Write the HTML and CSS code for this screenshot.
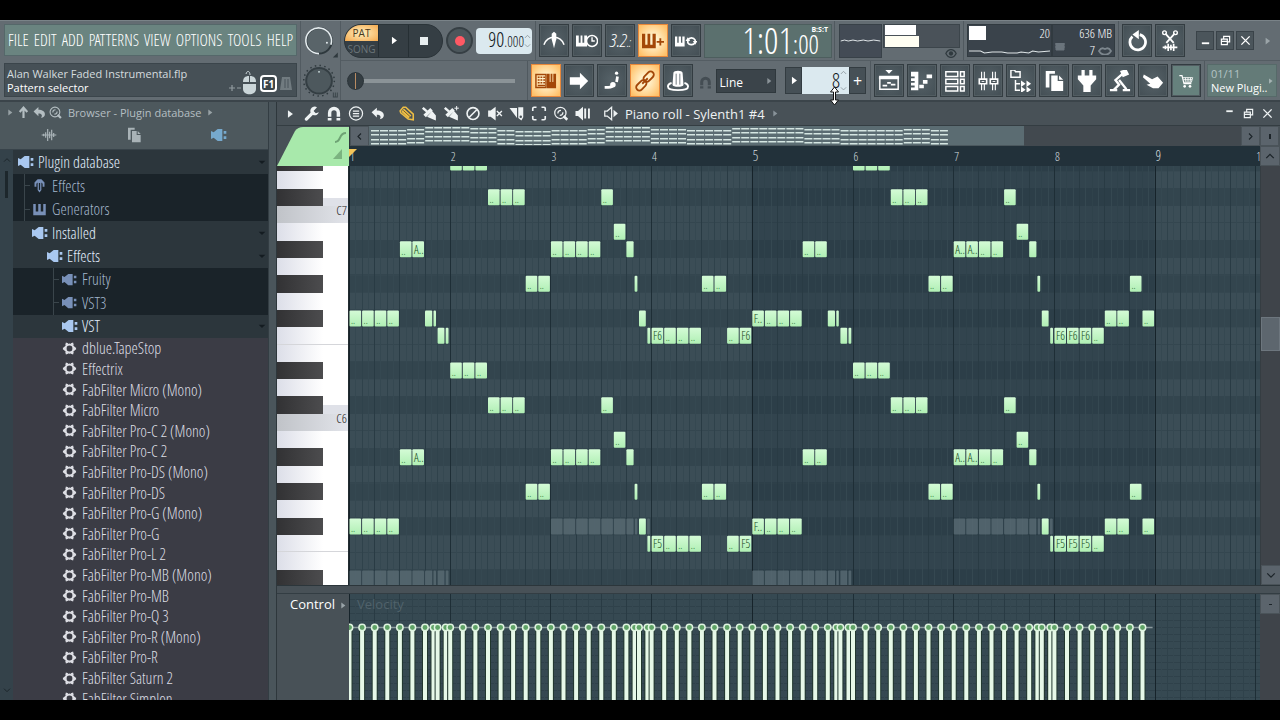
FILE: index.html
```html
<!DOCTYPE html>
<html lang="en">
<head>
<meta charset="utf-8">
<title>Piano roll - Sylenth1 #4</title>
<link rel="stylesheet" href="styles.css">
</head>
<body>
<svg class="sprite" aria-hidden="true">
  <symbol id="play" viewBox="0 0 24 24"><path d="M7 3l12 9-12 9z" fill="currentColor"/></symbol>
  <symbol id="plug" viewBox="0 0 24 24"><path d="M0 6l4 2 6-5h7v18h-7l-6-5-4 2z" fill="currentColor"/><path d="M19 6h4v4h-4zM19 14h4v4h-4z" fill="currentColor"/></symbol>
  <symbol id="gear" viewBox="0 0 24 24"><circle cx="12" cy="12" r="6.5" fill="none" stroke="currentColor" stroke-width="3.4"/><path d="M5 9v6M19 9v6M8 3l-1 4M16 3l1 4M8 21l-1-4M16 21l1-4M1.500 12h4M18.500 12h4" stroke="currentColor" stroke-width="3.600" fill="none"/></symbol>
  <symbol id="keys" viewBox="0 0 24 24"><path d="M2 3h4v12h4V3h4v12h4V3h4v18H2z" fill="currentColor"/></symbol>
  <symbol id="fx" viewBox="0 0 24 24"><path d="M4 14V7l5-5h6l5 5v7h-3V9l-2-2v12l-3 4-3-4V7L7 9v5z" fill="currentColor"/><path d="M12 8v11" stroke="#1a2329" stroke-width="2"/></symbol>
  <symbol id="wave" viewBox="0 0 24 24"><path d="M1 12h22M4 10v4M7 8v8M10 3v18M13 7v10M16 4v16M19 9v6" stroke="currentColor" stroke-width="1.800" fill="none"/></symbol>
  <symbol id="pages" viewBox="0 0 24 24"><path d="M3 1h10v3H7v15H3z" fill="currentColor"/><path d="M9 6h7v6h6v11H9z" fill="currentColor"/><path d="M17.500 6l4.500 4.500h-4.500z" fill="currentColor"/></symbol>
  <symbol id="up" viewBox="0 0 24 24"><path d="M12 22V5M5 11l7-8 7 8" fill="none" stroke="currentColor" stroke-width="4"/></symbol>
  <symbol id="undo" viewBox="0 0 24 24"><path d="M10 2v5c7 0 12 3 12 8 0 4-3 6-7 7 3-5 1-8-5-8v5L1 10z" fill="currentColor"/></symbol>
  <symbol id="search" viewBox="0 0 24 24"><circle cx="11" cy="11" r="9" fill="none" stroke="currentColor" stroke-width="2"/><path d="M7 12c0-3 2-5 5-5M15 10c0 3-2 5-5 5" fill="none" stroke="currentColor" stroke-width="2"/><path d="M16 16l6 6" stroke="currentColor" stroke-width="4"/></symbol>
  <symbol id="wrench" viewBox="0 0 24 24"><path d="M3 21l10-10" stroke="currentColor" stroke-width="5" stroke-linecap="round"/><path d="M20 2a7 7 0 1 0 3 8l-5 1.500-3.500-3.500z" fill="currentColor"/></symbol>
  <symbol id="magnet" viewBox="0 0 24 24"><path d="M5 17v-6a7 7 0 0 1 14 0v6" fill="none" stroke="currentColor" stroke-width="5.500"/><path d="M2 19h6v4H2zM16 19h6v4h-6z" fill="currentColor"/></symbol>
  <symbol id="list" viewBox="0 0 24 24"><circle cx="12" cy="12" r="10.500" fill="none" stroke="currentColor" stroke-width="2"/><path d="M7 8h10M7 12h10M7 16h10" stroke="currentColor" stroke-width="2"/></symbol>
  <symbol id="pencil" viewBox="0 0 24 24"><path d="M1 8L6 2l4 0 12 11 0 9-8-1L2 11z" fill="none" stroke="currentColor" stroke-width="2.500"/><path d="M3 9l4-5 12 11-5 5z" fill="currentColor"/><path d="M6 7l11 10" stroke="#6a5424" stroke-width="1.400"/></symbol>
  <symbol id="brush" viewBox="0 0 24 24"><path d="M2 3l7 6" stroke="currentColor" stroke-width="4"/><path d="M3 14L14 3l4 4L7 18zM9 17l8-9 6 7v8l-5-2z" fill="currentColor"/></symbol>
  <symbol id="brushplus" viewBox="0 0 24 24"><path d="M2 3l7 6" stroke="currentColor" stroke-width="4"/><path d="M3 14L14 3l4 4L7 18zM9 17l8-9 6 7v8l-5-2z" fill="currentColor"/><path d="M21 0v7M17.500 3.500h7" stroke="currentColor" stroke-width="1.600"/></symbol>
  <symbol id="no" viewBox="0 0 24 24"><circle cx="12" cy="12" r="9.500" fill="none" stroke="currentColor" stroke-width="2.600"/><path d="M6 18L18 6" stroke="currentColor" stroke-width="2.600"/></symbol>
  <symbol id="mute" viewBox="0 0 24 24"><path d="M1 7h4l8-6v22l-8-6H1z" fill="currentColor"/><path d="M15 8l8 8M23 8l-8 8" stroke="currentColor" stroke-width="2.200"/></symbol>
  <symbol id="slice" viewBox="0 0 24 24"><path d="M0 3h12v16z" fill="currentColor"/><path d="M14 2h8v16l-3 5-5-4z" fill="currentColor"/><circle cx="18" cy="17" r="2" fill="#485157"/></symbol>
  <symbol id="marquee" viewBox="0 0 24 24"><path d="M2 8V4q0-2 2-2h4M16 2h4q2 0 2 2v4M22 16v4q0 2-2 2h-4M8 22H4q-2 0-2-2v-4" fill="none" stroke="currentColor" stroke-width="2.600"/></symbol>
  <symbol id="preview" viewBox="0 0 24 24"><path d="M0 8h4l8-7v22l-8-7H0zM14 4h3v16h-3zM20 4h3v16h-3z" fill="currentColor"/></symbol>
  <symbol id="speaker" viewBox="0 0 24 24"><path d="M2 8h4l7-6v20l-7-6H2z" fill="none" stroke="currentColor" stroke-width="2"/><path d="M16 6l7 6-7 6z" fill="currentColor"/></symbol>
  <symbol id="min" viewBox="0 0 24 24"><path d="M4 18h16" stroke="currentColor" stroke-width="4"/></symbol>
  <symbol id="dash" viewBox="0 0 24 24"><path d="M5 7h14" stroke="currentColor" stroke-width="4"/></symbol>
  <symbol id="restore" viewBox="0 0 24 24"><path d="M8 8V3h13v12h-4M3 9h13v12H3zM3 14h13" fill="none" stroke="currentColor" stroke-width="2.600"/></symbol>
  <symbol id="close" viewBox="0 0 24 24"><path d="M3 3l18 18M21 3L3 21" stroke="currentColor" stroke-width="3"/></symbol>
  <symbol id="chev-l" viewBox="0 0 24 24"><path d="M16 4l-8 8 8 8" fill="none" stroke="currentColor" stroke-width="3"/></symbol>
  <symbol id="chev-r" viewBox="0 0 24 24"><path d="M8 4l8 8-8 8" fill="none" stroke="currentColor" stroke-width="3"/></symbol>
  <symbol id="chev-u" viewBox="0 0 24 24"><path d="M3 17l9-9 9 9" fill="none" stroke="currentColor" stroke-width="3"/></symbol>
  <symbol id="chev-d" viewBox="0 0 24 24"><path d="M3 8l9 9 9-9" fill="none" stroke="currentColor" stroke-width="3"/></symbol>
  <symbol id="tri-d" viewBox="0 0 24 24"><path d="M2 8h20l-10 10z" fill="currentColor"/></symbol>

  <symbol id="metronome" viewBox="0 0 24 24"><path d="M1 16C3 11 7 8 12 8s9 3 11 8" fill="none" stroke="currentColor" stroke-width="1.600"/><path d="M9.500 4L12 2l2.500 2v6L12 20l-2.500-10z" fill="currentColor"/></symbol>
  <symbol id="wait" viewBox="0 0 24 24"><path d="M0 6h3v8h2V6h2v8h2V6h3v12H0z" fill="currentColor"/><circle cx="17.500" cy="12" r="6" fill="#485359" stroke="currentColor" stroke-width="1.600"/><path d="M17.500 8v4h3" fill="none" stroke="currentColor" stroke-width="1.500"/></symbol>
  <symbol id="overdub" viewBox="0 0 24 24"><path d="M0 4h3.500v12h2.500V4h3v12h2.500V4H15v16H0zM19 9h2v3h3v2h-3v3h-2v-3h-3v-2h3z" fill="currentColor"/></symbol>
  <symbol id="looprec" viewBox="0 0 24 24"><path d="M0 7h2.500v7h1.500V7h2.500v7h1.500V7h2.500v11H0z" fill="currentColor"/><path d="M14 11a4.500 4.500 0 0 1 8 0v3M22 13a4.500 4.500 0 0 1-8 1v-3" fill="none" stroke="currentColor" stroke-width="1.800"/><path d="M19.500 12h5l-2.500 4zM11.500 12h5L14 8z" fill="currentColor"/></symbol>
  <symbol id="typing" viewBox="0 0 24 24"><path d="M1 5h11v14H1z" fill="none" stroke="currentColor" stroke-width="1.600"/><path d="M3 8h2m1 0h2m1 0h2M3 11h2m1 0h2m1 0h2M3 14h2m1 0h2m1 0h2M3 17h8" stroke="currentColor" stroke-width="1.600"/><path d="M13 4h3v9h1V4h2v9h1V4h3v16H13z" fill="currentColor"/></symbol>
  <symbol id="arrow" viewBox="0 0 24 24"><path d="M2 8h11V3l9 9-9 9v-5H2z" fill="currentColor"/></symbol>
  <symbol id="slide" viewBox="0 0 24 24"><path d="M4 19h4c3 0 5-1 6-4" fill="none" stroke="currentColor" stroke-width="3"/><path d="M17 13l1-6" stroke="currentColor" stroke-width="3"/><circle cx="17" cy="3.500" r="1.800" fill="currentColor"/><circle cx="13" cy="16" r="3" fill="currentColor"/></symbol>
  <symbol id="link" viewBox="0 0 24 24"><g fill="none" stroke="currentColor" stroke-width="2"><rect x="10" y="4" width="13" height="7" rx="3.500" transform="rotate(-45 16 8)"/><rect x="1" y="13" width="13" height="7" rx="3.500" transform="rotate(-45 8 16)"/><path d="M9 15l6-6"/></g></symbol>
  <symbol id="knob" viewBox="0 0 24 24"><path d="M7 3c0-3 10-3 10 0l1 13c0 3-12 3-12 0z" fill="currentColor"/><path d="M10 4v12M14 4v12" stroke="#687277"/><path d="M5 14c-3 1-4 2-4 4 0 3 5 4 11 4s11-1 11-4c0-2-1-3-4-4" fill="none" stroke="currentColor" stroke-width="2"/></symbol>
  <symbol id="redo" viewBox="0 0 24 24"><path d="M7 7a8.500 8.500 0 1 0 8-2" fill="none" stroke="currentColor" stroke-width="3"/><path d="M14 0v10l-7-5z" fill="currentColor"/></symbol>
  <symbol id="cut" viewBox="0 0 24 24"><path d="M7 4l9 10M17 4L8 14" stroke="currentColor" stroke-width="2"/><circle cx="6" cy="3" r="2" fill="none" stroke="currentColor" stroke-width="1.500"/><circle cx="18" cy="3" r="2" fill="none" stroke="currentColor" stroke-width="1.500"/><path d="M4 19h16M7 17v4M10 15v8M13 16v6M16 15v8" stroke="currentColor" stroke-width="1.800"/></symbol>
  <symbol id="playlist" viewBox="0 0 24 24"><path d="M8 0h8l-4 4zM1 7h22v3H1z" fill="currentColor"/><path d="M2 7h20v14H2z" fill="none" stroke="currentColor" stroke-width="1.600"/><path d="M5 17h5M10 14h4M14 16h5" stroke="currentColor" stroke-width="2"/></symbol>
  <symbol id="steps" viewBox="0 0 24 24"><path d="M0 2h8v20H0v-3h4v-2H0v-3h4v-2H0v-3h4V7H0z" fill="currentColor"/><path d="M9 18h5M13 13h5M17 7h6" stroke="currentColor" stroke-width="4"/></symbol>
  <symbol id="rack" viewBox="0 0 24 24"><path d="M2 2h13v5H2zM2 10h13v5H2zM2 18h13v5H2zM18 2h4v5h-4zM18 10h4v5h-4zM18 18h4v5h-4z" fill="none" stroke="currentColor" stroke-width="1.600"/></symbol>
  <symbol id="mixer" viewBox="0 0 24 24"><path d="M5 2v20M8 2v20M17 2v20M20 2v20" stroke="currentColor" stroke-width="1.200"/><path d="M2.500 10h8v5h-8zM14.500 10h8v5h-8z" fill="#485359" stroke="currentColor" stroke-width="1.800"/><path d="M5 12.500h3M17 12.500h3" stroke="currentColor"/></symbol>
  <symbol id="tree" viewBox="0 0 24 24"><path d="M1 0h4l1 2h5v6H1zM6 11v11h5M6 15h5" fill="none" stroke="currentColor" stroke-width="1.600"/><path d="M12 11.500l5 3.500-5 3.500zM18 11.500l5 3.500-5 3.500zM12 18l5 3.500-5 3.500zM18 18l5 3.500-5 3.500z" fill="currentColor"/></symbol>
  <symbol id="vplug" viewBox="0 0 24 24"><path d="M6 0h3.500v6h5V0H18v6h4v4l-6 7v7H8v-7l-6-7V6h4z" fill="currentColor"/></symbol>
  <symbol id="lamp" viewBox="0 0 24 24"><path d="M12 1l7-2 3 6-7 3z" fill="currentColor"/><path d="M15 4L7 11l4 5-6 6M11 11l8 10" fill="none" stroke="currentColor" stroke-width="2.500"/><path d="M1 22h8M15 22h8" stroke="currentColor" stroke-width="2.500"/></symbol>
  <symbol id="hand" viewBox="0 0 24 24"><path d="M2 5l9 5 6-3 6 7-5 6h-6l-7-4 4-1-8-7z" fill="currentColor"/></symbol>
  <symbol id="cart" viewBox="0 0 24 24"><path d="M2 4h4l3 12h11" fill="none" stroke="currentColor" stroke-width="1.800"/><path d="M7 7h15l-2 7H9M11 7l1 7M15 7v7M19 7l-1 7M8 10h13" fill="none" stroke="currentColor" stroke-width="1.300"/><circle cx="10" cy="20" r="2" fill="currentColor"/><circle cx="18" cy="20" r="2" fill="currentColor"/></symbol>
</svg>

<div class="app">
  <header class="toolbar">
    <div class="tb-left">
      <nav class="menubar"><button>FILE</button><button>EDIT</button><button>ADD</button><button>PATTERNS</button><button>VIEW</button><button>OPTIONS</button><button>TOOLS</button><button>HELP</button></nav>
      <div class="hint">
        <div class="hint-text"><div>Alan Walker Faded Instrumental.flp</div><div class="hint-sub">Pattern selector</div></div>
        <svg class="hint-icons" viewBox="0 0 66 26" aria-hidden="true"><path d="M1 18h6M4 15v6M9 18h4" stroke="#929b9f" stroke-width="1.200"/><path d="M15 14h13v5c0 7-13 7-13 0zM15 12c0-4 2-6 6-6v6zM22 6c4 0 6 2 6 6h-6z" fill="#cbd6d9"/><path d="M18 4c1-4 4-3 4 1" fill="none" stroke="#cbd6d9"/><rect x="33" y="6" width="15" height="15" rx="3" fill="#3c464b" stroke="#fff" stroke-width="2"/><text x="35" y="18" class="f1">F1</text><path d="M54 7h8l2 13H52z" fill="#717b80"/><path d="M57 9v9M60 9v9" stroke="#4a555a"/></svg>
      </div>
    </div>
    <div class="tb-knobs">
      <svg viewBox="0 0 40 40" aria-hidden="true"><circle cx="18" cy="20" r="13" fill="#596469" stroke="#2e383d" stroke-width="2"/><path d="M18 33A13 13 0 1 1 30 24" fill="none" stroke="#e5ecef" stroke-width="1.600"/><circle cx="26" cy="22" r="1" fill="#e5ecef"/><path d="M37 32v5h-5z" fill="#2f393e"/></svg>
      <svg viewBox="0 0 40 40" aria-hidden="true"><circle cx="18" cy="20" r="15.500" fill="none" stroke="#2f393e" stroke-width="1.500" stroke-dasharray="1.500 3.370"/><circle cx="18" cy="20" r="13" fill="#4d585d" stroke="#343e43" stroke-width="2"/><circle cx="18" cy="11" r="1" fill="#cdd"/><path d="M32 32h1v4h1v-4h1v4h1v-4h1v5h-5z" fill="#3b454a"/></svg>
    </div>
    <div class="tb-main">
      <div class="tb-row">
        <div class="transport">
          <button class="mode"><span class="pat">PAT</span><span class="song">SONG</span></button>
          <button aria-label="Play"><svg class="i12"><use href="#play"/></svg></button>
          <button aria-label="Stop"><span class="stop"></span></button>
        </div>
        <button class="rec" aria-label="Record"><span></span></button>
        <button class="tempo"><span class="t-int">90</span><span class="t-dec">.000</span><span class="spin"><svg><use href="#chev-u"/></svg><svg><use href="#chev-d"/></svg></span></button>
        <div class="btns sep-l">
          <button class="sq" aria-label="Metronome"><svg><use href="#metronome"/></svg></button>
          <button class="sq" aria-label="Wait for input"><svg><use href="#wait"/></svg></button>
          <button class="sq count">3.2<small>.:</small></button>
          <button class="sq on" aria-label="Overdub"><svg><use href="#overdub"/></svg></button>
          <button class="sq" aria-label="Loop record"><svg><use href="#looprec"/></svg></button>
        </div>
        <div class="clock"><span class="bst">B:S:T</span><span class="c-big">1:01</span><span class="c-small">:00</span></div>
        <div class="scopes sep-l">
          <svg class="scope" viewBox="0 0 42 34" aria-hidden="true"><path d="M0 17l4-1 4 1 5-1 5 1 6-1 5 1 6-1 7 1" fill="none" stroke="#e9eef0"/></svg>
          <div class="vu"><div class="vu-box"><i></i><i></i></div><svg viewBox="0 0 14 10" aria-hidden="true"><path d="M1 5c3-6 9-6 12 0-3 6-9 6-12 0z" fill="none" stroke="#303a3f" stroke-width="1.500"/><circle cx="7" cy="5" r="2.500" fill="#303a3f"/></svg></div>
        </div>
        <div class="cpu-wrap sep-l">
          <div class="cpu"><i></i><span>20</span><svg viewBox="0 0 84 6" preserveAspectRatio="none" aria-hidden="true"><path d="M0 2h12l4 2 8-1h10l6 1h10l4-1 8 1 4-2 6 1 12-1" fill="none" stroke="#dfe6e8" stroke-width="1.200"/></svg></div>
          <div class="mem"><span>636 MB</span><span class="poly"><svg viewBox="0 0 10 8" class="chip" aria-hidden="true"><path d="M1 0h8v7H1zM0 1h10M0 4h10" fill="#6b757c" stroke="#6b757c"/></svg>7<svg viewBox="0 0 14 8" class="lips" aria-hidden="true"><path d="M1 4c3-5 5-2 6-2s3-3 6 2c-3 5-9 5-12 0z" fill="none" stroke="#7c868d" stroke-width="1.800"/></svg></span></div>
        </div>
        <div class="btns sep-l">
          <button class="sq" aria-label="Undo"><svg><use href="#redo"/></svg></button>
          <button class="sq" aria-label="Edit audio"><svg><use href="#cut"/></svg></button>
        </div>
        <div class="winbtns">
          <button aria-label="Minimize"><svg><use href="#min"/></svg></button>
          <button aria-label="Restore"><svg><use href="#restore"/></svg></button>
          <button aria-label="Close"><svg><use href="#close"/></svg></button>
        </div>
        <svg class="more"><use href="#play"/></svg>
      </div>
      <div class="tb-row">
        <input class="slider" type="range" min="0" max="100" value="0" aria-label="Main pitch">
        <div class="btns sep-l">
          <button class="sq on" aria-label="Typing keyboard"><svg><use href="#typing"/></svg></button>
          <button class="sq" aria-label="Step"><svg><use href="#arrow"/></svg></button>
          <button class="sq" aria-label="Slide"><svg><use href="#slide"/></svg></button>
          <button class="sq on" aria-label="Link"><svg><use href="#link"/></svg></button>
          <button class="sq" aria-label="Multilink"><svg><use href="#knob"/></svg></button>
        </div>
        <svg class="snapicon"><use href="#magnet"/></svg>
        <div class="snap"><select aria-label="Snap"><option>Line</option></select><svg><use href="#play"/></svg></div>
        <div class="pattern">
          <button aria-label="Pattern menu"><svg class="i12"><use href="#play"/></svg></button>
          <input type="text" value="8" aria-label="Pattern">
          <span class="spin"><svg><use href="#chev-u"/></svg><svg><use href="#chev-d"/></svg></span>
          <button aria-label="Add pattern">+</button>
        </div>
        <div class="btns grow sep-l">
          <button class="sq" aria-label="Playlist"><svg><use href="#playlist"/></svg></button>
          <button class="sq" aria-label="Piano roll"><svg><use href="#steps"/></svg></button>
          <button class="sq" aria-label="Channel rack"><svg><use href="#rack"/></svg></button>
          <button class="sq" aria-label="Mixer"><svg><use href="#mixer"/></svg></button>
          <button class="sq" aria-label="Browser"><svg><use href="#tree"/></svg></button>
          <button class="sq" aria-label="Projects"><svg><use href="#pages"/></svg></button>
          <button class="sq" aria-label="Plugins"><svg><use href="#vplug"/></svg></button>
          <button class="sq" aria-label="Tempo tapper"><svg><use href="#lamp"/></svg></button>
          <button class="sq" aria-label="Touch"><svg><use href="#hand"/></svg></button>
          <button class="sq shop" aria-label="Shop"><svg><use href="#cart"/></svg></button>
        </div>
        <div class="news sep-l"><div class="news-box"><span class="news-n">01/11</span><span>New Plugi..</span><svg><use href="#play"/></svg></div></div>
      </div>
    </div>
  </header>

  <main class="work">
    <aside class="browser">
      <div class="br-head">
        <div class="br-title"><svg class="dim"><use href="#play"/></svg><svg><use href="#up"/></svg><svg><use href="#undo"/></svg><svg><use href="#search"/></svg><span>Browser - Plugin database</span><svg class="dim"><use href="#play"/></svg></div>
        <div class="br-tabs"><button aria-label="All"><svg><use href="#wave"/></svg></button><button aria-label="Project"><svg><use href="#pages"/></svg></button><button class="sel" aria-label="Plugins"><svg><use href="#plug"/></svg></button></div>
      </div>
      <div class="br-body">
        <div class="br-scroll"><svg><use href="#chev-u"/></svg><i></i><svg class="end"><use href="#chev-d"/></svg></div>
        <div class="tree">
          <div class="node root"><svg><use href="#plug"/></svg><span>Plugin database</span><svg class="fold"><use href="#tri-d"/></svg></div>
          <div class="nodes">
            <div class="node l1 dark"><svg><use href="#fx"/></svg><span>Effects</span></div>
            <div class="node l1 dark"><svg><use href="#keys"/></svg><span>Generators</span></div>
            <div class="node l1"><svg><use href="#plug"/></svg><span>Installed</span><svg class="fold"><use href="#tri-d"/></svg></div>
            <div class="node l2"><svg><use href="#plug"/></svg><span>Effects</span><svg class="fold"><use href="#tri-d"/></svg></div>
            <div class="node l3 dark"><svg><use href="#plug"/></svg><span>Fruity</span></div>
            <div class="node l3 dark"><svg><use href="#plug"/></svg><span>VST3</span></div>
            <div class="node l3"><svg><use href="#plug"/></svg><span>VST</span><svg class="fold"><use href="#tri-d"/></svg></div>
          </div>
          <ul class="plugins" id="plugins"></ul>
        </div>
      </div>
    </aside>
    <div class="splitter"></div>

    <section class="roll">
      <div class="roll-title">
        <div class="tools">
          <svg class="first"><use href="#play"/></svg><svg><use href="#wrench"/></svg><svg><use href="#magnet"/></svg><svg><use href="#list"/></svg><svg class="gap"><use href="#undo"/></svg>
          <svg class="gold"><use href="#pencil"/></svg><svg><use href="#brush"/></svg><svg><use href="#brushplus"/></svg><svg><use href="#no"/></svg><svg><use href="#mute"/></svg><svg><use href="#slice"/></svg><svg><use href="#marquee"/></svg><svg><use href="#search"/></svg><svg><use href="#preview"/></svg>
        </div>
        <svg class="spk"><use href="#speaker"/></svg><h1>Piano roll - Sylenth1 #4</h1><svg class="caret"><use href="#play"/></svg>
        <div class="roll-win"><button aria-label="Minimize"><svg><use href="#dash"/></svg></button><button aria-label="Restore"><svg><use href="#restore"/></svg></button><button aria-label="Close"><svg><use href="#close"/></svg></button></div>
      </div>
      <svg class="corner" viewBox="0 0 72 40" preserveAspectRatio="none" aria-hidden="true"><path d="M0 40L18 5Q21 1 26 1H72V40z" fill="#a8e9ab"/><path d="M58 16c7 0 3-9 11-9" fill="none" stroke="#6ea374" stroke-width="2"/><path d="M56 33l9-10v10z" fill="#7bb380"/></svg>
      <div class="overview"><button aria-label="Scroll left"><svg><use href="#chev-l"/></svg></button><div class="track"><svg id="mini" class="mini"></svg></div><button aria-label="Scroll right"><svg><use href="#chev-r"/></svg></button></div>
      <button class="ov-end" aria-label="Zoom"><i></i></button>
      <svg id="ruler" class="ruler"></svg>
      <button class="sc-up" aria-label="Scroll up"><svg><use href="#chev-u"/></svg></button>
      <div class="keys"><div class="keys-in" id="keyboard"></div></div>
      <svg id="grid" class="grid"></svg>
      <div class="vscroll"><i></i><button aria-label="Scroll down"><svg><use href="#chev-d"/></svg></button></div>
      <div class="hsplit"></div>
      <div class="control"><span>Control</span><svg><use href="#play"/></svg></div>
      <svg id="lane" class="lane"></svg>
      <div class="lane-sc"><button aria-label="Collapse"><i></i></button></div>
    </section>
  </main>
  <svg class="cursor" viewBox="0 0 10 20" aria-hidden="true"><path d="M5 1l4 5H6v8h3l-4 5-4-5h3V6H1z" fill="#fff" stroke="#111" stroke-width="1"/></svg>
</div>
<script src="app.js"></script>
</body>
</html>
```

FILE: styles.css
```css
* { box-sizing: border-box; }
:root {
  --narrow: "Open Sans Condensed Light", "Liberation Sans Narrow", "Open Sans", sans-serif;
  --ui: "Open Sans", "Noto Sans", sans-serif;
}
body { margin: 0; background: #000; padding: 20px 0; font-family: var(--ui); color: #fff; }
button, input, select { font: inherit; color: inherit; border: 0; padding: 0; margin: 0; background: none; border-radius: 0; }
svg { display: block; flex: none; }
.sprite { position: absolute; width: 0; height: 0; }
.app { position: relative; display: flex; flex-direction: column; height: calc(100vh - 40px); min-height: 400px; overflow: hidden; background: #485157; }

/* toolbar */
.toolbar { display: flex; height: 82px; background: #636c72; border-bottom: 2px solid #3b444a; border-top: 1px solid #7a8388; }
.tb-left { width: 300px; padding: 3px 3px 3px 4px; display: flex; flex-direction: column; gap: 7px; }
.menubar { display: flex; flex: 1; align-items: center; justify-content: space-between; padding: 0 3px 0 3px; background: #6a8480; border: 1px solid #55686a; font: 16px var(--narrow); }
.hint { display: flex; flex: 1; justify-content: space-between; background: #465056; border: 1px solid #3b454b; padding: 3px 2px 0; font-size: 11px; line-height: 14px; color: #d5dcdf; white-space: nowrap; }
.hint-sub { color: #fff; }
.hint-icons { width: 66px; height: 26px; align-self: flex-end; margin-left: -20px; }
.f1 { font: bold 10px var(--ui); fill: #fff; }
.tb-knobs { width: 41px; display: flex; flex-direction: column; border-left: 1px solid #525b61; border-right: 1px solid #525b61; }
.tb-knobs svg { width: 40px; flex: 1; min-height: 0; }
.tb-main { flex: 1; min-width: 0; display: flex; flex-direction: column; }
.tb-row { flex: 1; display: flex; align-items: center; padding: 0 3px; min-height: 0; }
.tb-row + .tb-row { border-top: 1px solid #545d63; }
.sep-l { border-left: 1px solid #50595f; }
.transport { display: flex; width: 99px; height: 34px; border-radius: 17px; overflow: hidden; background: #353e44; border: 1px solid #2b3439; }
.transport button { flex: 1; display: flex; align-items: center; justify-content: center; border-left: 1px solid #262f34; }
.transport button:last-child { padding-right: 4px; }
.transport .mode { width: 33px; flex: none; flex-direction: column; border: 0; font: 10px var(--ui); line-height: 16px; }
.mode span { width: 100%; height: 16px; }
.pat { background: radial-gradient(#fff0c0, #f5a94d); color: #493a1c; }
.song { color: #6b757a; }
.i12 { width: 10px; height: 11px; }
.stop { width: 8px; height: 8px; background: #e8eef0; }
.rec { width: 27px; height: 27px; margin-left: 3px; border-radius: 50%; background: #4b565b; border: 2px solid #363f44; display: grid; place-items: center; }
.rec span { width: 10px; height: 10px; border-radius: 50%; background: #ff5964; }
.tempo { display: flex; align-items: baseline; justify-content: flex-end; width: 56px; height: 26px; margin-left: 3px; padding: 0 1px; border-radius: 4px; background: #dbe9ef; color: #101619; font: 20px/24px var(--narrow); }
.t-dec { font-size: 14px; }
.spin { display: flex; flex-direction: column; gap: 2px; align-self: center; color: #8e999f; }
.spin svg { width: 7px; height: 7px; }
.btns { display: flex; gap: 3px; padding-left: 3px; margin-left: 3px; height: 100%; align-items: center; }
.btns.grow { flex: 1; }
.grow .sq { flex: 1; }
.sq { width: 30px; height: 33px; display: grid; place-items: center; background: radial-gradient(#566268, #434e54); border: 1px solid #333c41; box-shadow: inset 0 0 0 1px #525d62; }
.sq svg { width: 22px; height: 22px; }
.sq.on { background: radial-gradient(#fff3cf 20%, #ffc169 90%); border-color: #e8883a; color: #a34708; box-shadow: none; }
.sq.shop { background: #66817d; }
.sq.shop svg { width: 16px; height: 16px; }
.sq.count { font: italic 19px/30px var(--narrow); display: block; }
.count small { font-size: 12px; }
.clock { position: relative; flex: 1; height: 34px; margin: 0 2px 0 3px; padding-right: 12px; background: #5b706e; border: 1px solid #4d5e5e; display: flex; align-items: baseline; justify-content: flex-end; line-height: 32px; font-family: var(--narrow); }
.c-big { font-size: 36px; }
.c-small { font-size: 26px; }
.bst { position: absolute; top: 0; right: 3px; font: bold 7px/9px var(--ui); }
.scopes { display: flex; height: 100%; align-items: center; padding: 0 3px 0 4px; }
.scope { width: 43px; height: 34px; background: #434b55; border: 1px solid #384148; }
.vu { width: 78px; height: 34px; display: flex; flex-direction: column; align-items: flex-end; gap: 1px; }
.vu-box { width: 77px; height: 24px; background: #4a5259; border: 1px solid #3c454b; padding-left: 1px; display: flex; flex-direction: column; gap: 1px; }
.vu-box i { width: 31px; flex: 1; background: #fff; }
.vu-box i + i { width: 34px; background: #fffef2; }
.vu svg { width: 12px; height: 9px; margin-right: 3px; }
.cpu-wrap { display: flex; height: 100%; align-items: center; padding: 0 0 0 3px; font: 13px/15px var(--narrow); }
.cpu { width: 85px; height: 33px; background: #3a434b; border: 1px solid #313a40; display: grid; grid-template-columns: 17px 1fr; grid-template-rows: 14px 1fr; padding: 1px; }
.cpu i { background: #fff; }
.cpu span { text-align: right; }
.cpu svg { grid-column: 1 / 3; width: 100%; height: 6px; align-self: end; }
.mem { width: 63px; height: 33px; background: #3a434b; border: 1px solid #313a40; padding: 1px 2px; display: flex; flex-direction: column; gap: 2px; text-align: right; white-space: nowrap; }
.poly { display: flex; align-items: center; justify-content: flex-end; gap: 3px; }
.chip { width: 10px; height: 8px; margin-right: auto; align-self: flex-start; }
.lips { width: 14px; height: 8px; }
.winbtns { display: flex; gap: 2px; margin-left: 11px; }
.winbtns button { width: 18px; height: 19px; background: #4b555b; border: 1px solid #3a4349; display: grid; place-items: center; }
.winbtns svg { width: 11px; height: 11px; }
.more { width: 9px; height: 12px; color: #9ba4a8; margin: 0 5px 0 9px; }
.slider { appearance: none; width: 178px; height: 20px; margin: 0 9px 0 3px; }
.slider::-webkit-slider-runnable-track { height: 4px; background: #8b9397; }
.slider::-webkit-slider-thumb { appearance: none; width: 17px; height: 18px; margin-top: -7px; border-radius: 50%; background: linear-gradient(90deg, #343d42 46%, #b98b62 46%, #b98b62 56%, #343d42 56%); border: 1px solid #2a3338; }
.snapicon { width: 13px; height: 15px; margin: 4px 4px 0 6px; color: #444d53; }
.snap { position: relative; width: 64px; height: 24px; background: #3b444a; border: 1px solid #2f383d; }
.snap select { appearance: none; width: 100%; height: 22px; padding-left: 3px; font-size: 12px; }
.snap svg { position: absolute; right: 2px; top: 7px; width: 8px; height: 8px; color: #8a9398; }
.pattern { display: flex; align-items: stretch; width: 81px; height: 27px; margin: 0 1px 0 9px; background: #dbe9ef; }
.pattern button { width: 17px; background: #465056; border: 1px solid #333c41; display: grid; place-items: center; font-size: 16px; line-height: 20px; }
.pattern input { flex: 1; min-width: 0; text-align: right; color: #101619; font: 20px var(--narrow); }
.pattern .spin { gap: 9px; width: 9px; }
.news { height: 100%; display: flex; align-items: center; padding-left: 2px; margin-left: 3px; }
.news-box { position: relative; width: 70px; height: 33px; padding: 2px 3px; display: flex; flex-direction: column; background: #647b78; border: 1px solid #566a69; font-size: 11px; line-height: 14px; white-space: nowrap; }
.news-n { color: #b4c4c4; }
.news-box svg { position: absolute; right: 2px; top: 12px; width: 7px; height: 8px; color: #a5b3b3; }

/* browser */
.work { flex: 1; display: flex; min-height: 0; }
.browser { width: 268px; display: flex; flex-direction: column; min-height: 0; }
.br-head { height: 48px; background: #4d585d; border-bottom: 1px solid #38434a; padding: 2px 6px; }
.br-title { display: flex; align-items: center; gap: 3px; height: 17px; font-size: 11px; color: #b4bec2; white-space: nowrap; }
.br-title svg { width: 13px; height: 13px; }
.br-title svg.dim { width: 8px; height: 9px; color: #98a2a6; }
.br-title span { margin: 0 1px 0 3px; }
.br-tabs { display: flex; color: #a9b3b7; margin-top: 6px; }
.br-tabs button { flex: 1; display: grid; place-items: center; }
.br-tabs svg { width: 16px; height: 16px; }
.br-tabs .sel { color: #76a9cd; }
.br-body { flex: 1; display: flex; min-height: 0; }
.br-scroll { width: 13px; background: #34424a; display: flex; flex-direction: column; align-items: center; color: #1c262b; padding: 6px 0; gap: 7px; }
.br-scroll svg { width: 8px; height: 8px; }
.br-scroll i { width: 3px; height: 27px; background: #1d272c; }
.br-scroll .end { margin-top: auto; }
.tree { flex: 1; min-width: 0; overflow: hidden; background: #3b3c45; font: 16px/20px var(--narrow); }
.nodes { display: grid; grid-auto-rows: 1fr; height: 164px; }
.node { display: flex; align-items: center; gap: 4px; background: #2c363c; color: #e2eefc; padding: 0 2px 0 5px; }
.node svg { width: 16px; height: 16px; color: #a9c8f0; }
.node .fold { width: 8px; height: 8px; margin-left: auto; color: #141c21; }
.node.dark { background: #1a2329; color: #a3b6cc; }
.node.dark svg { color: #7890b8; width: 15px; height: 15px; margin-right: 1px; }
.root { height: 24px; }
.l1 { padding-left: 19px; }
.l2 { padding-left: 34px; }
.l3 { padding-left: 49px; }
.l1.dark, .l3.dark { background-image: linear-gradient(#3a454b, #3a454b), linear-gradient(#3a454b, #3a454b); background-repeat: no-repeat; background-size: 1px 100%, 6px 1px; }
.l1.dark { background-position: 11px 0, 11px 50%; }
.l3.dark { background-position: 40px 0, 40px 50%; }
.plugins { list-style: none; margin: 0; padding: 0; display: grid; grid-auto-rows: 1fr; height: 371px; color: #dddee4; }
.plugins li { display: flex; align-items: center; gap: 5px; padding-left: 49px; white-space: nowrap; }
.plugins svg { width: 15px; height: 15px; }
.splitter { width: 9px; background: #4a555b; border-left: 1px solid #333d43; border-right: 1px solid #2e373c; }

/* piano roll */
.roll { flex: 1; min-width: 0; display: grid; grid-template-columns: 72px 1fr 20px; grid-template-rows: 24px 20px 20px 1fr 9px 106px; background: #485157; }
.roll-title { grid-column: 1 / -1; display: flex; align-items: center; border-bottom: 1px solid #343d42; color: #eef2f3; }
.tools { display: flex; gap: 6px; padding-left: 5px; }
.tools svg { width: 16px; height: 15px; }
.tools svg.first { height: 10px; margin-top: 3px; }
.tools .gap { width: 14px; margin: 0 8px 0 1px; }
.gold { color: #edbd45; }
.spk { width: 16px; height: 15px; margin-left: 12px; }
.roll-title h1 { margin: 0 6px; font: 13px var(--ui); white-space: nowrap; }
.caret { width: 8px; height: 9px; color: #89939a; }
.roll-win { margin-left: auto; display: flex; gap: 8px; padding-right: 7px; }
.roll-win svg { width: 11px; height: 11px; }
.corner { grid-row: 2 / 4; width: 72px; height: 40px; }
.overview { display: flex; border-left: 1px solid #2d363b; background: #42494f; }
.overview button, .ov-end, .sc-up, .vscroll button, .lane-sc button { width: 19px; background: #5b646c; border: 1px solid #4a5359; color: #1c2429; display: grid; place-items: center; }
.overview svg:not(.mini) { width: 9px; height: 9px; }
.track { flex: 1; min-width: 0; }
.mini { width: 655px; height: 20px; background: #5b6c72; border-bottom: 1px solid #4b585e; }
.ov-end i { width: 2px; height: 5px; background: #1c2429; }
.ruler { width: 100%; height: 20px; background: #22313a; }
.ruler text { font: 12px var(--narrow); fill: #d3dcdf; }
.ruler .big { font-size: 14px; }
.sc-up, .vscroll button, .lane-sc button { width: 20px; height: 20px; }
.lane-sc i { width: 3px; height: 1px; background: #1c2429; }
.sc-up svg, .vscroll svg { width: 10px; height: 10px; }
.keys { overflow: hidden; background: #fff; border-right: 1px solid #222c31; }
.keys-in { display: grid; grid-auto-rows: 1fr; height: 433px; margin-top: -12px; }
.key { display: flex; justify-content: flex-end; background: linear-gradient(90deg, #dcdee8, #fff 46px); }
.key.black { background: linear-gradient(90deg, #323234, #4c4c4e) 0 0 / 46px 100% no-repeat #fff; }
.key.edge { border-bottom: 1px solid #d5d6da; }
.key.c { background: linear-gradient(90deg, #c0c3c8, #e2e4ea); }
.key.black.overc { background: linear-gradient(90deg, #323234, #4c4c4e) 0 0 / 46px 100% no-repeat, linear-gradient(#fff 50%, #dfe1e8 50%); }
.key span { font: 13px/12px var(--narrow); color: #1d2022; margin: -2px 1px 0 0; }
.grid { width: 100%; height: 100%; min-height: 0; background: #3b4d56; overflow: hidden; }
.note { fill: url(#ng); }
.ghost { fill: #5a6b74; opacity: .8; }
.grid text { font: 12px var(--narrow); fill: #174a20; }
.grid .dots { font-size: 10px; fill: #2f7a3b; }
.vscroll { display: flex; flex-direction: column; justify-content: space-between; background: #3f444a; border-left: 1px solid #353d42; }
.vscroll i { height: 34px; margin-top: 151px; background: #5d666e; border: 1px solid #6d767e; }
.hsplit { grid-column: 1 / -1; background: #485157; border-top: 1px solid #2c363b; border-bottom: 1px solid #333d43; }
.control { display: flex; align-items: flex-start; padding: 1px 0 0 13px; gap: 4px; font-size: 13px; line-height: 18px; }
.control svg { width: 8px; height: 9px; margin-top: 6px; color: #9aa4a9; }
.lane { width: 100%; height: 106px; background: #364952; }
.lane text { font: 13px var(--ui); fill: #50626b; }
.lane-sc { background: #3f444a; }
.cursor { position: absolute; left: 829px; top: 66px; width: 11px; height: 20px; }
```

FILE: app.js
```javascript
const BAR = 100.7, SLOT = BAR / 8, ROW = 52 / 3, TOP = -12, X0 = 0;
const BLACK = [0, 2, 5, 7, 9];

const plugins = ['dblue.TapeStop', 'Effectrix', 'FabFilter Micro (Mono)', 'FabFilter Micro', 'FabFilter Pro-C 2 (Mono)', 'FabFilter Pro-C 2', 'FabFilter Pro-DS (Mono)', 'FabFilter Pro-DS', 'FabFilter Pro-G (Mono)', 'FabFilter Pro-G', 'FabFilter Pro-L 2', 'FabFilter Pro-MB (Mono)', 'FabFilter Pro-MB', 'FabFilter Pro-Q 3', 'FabFilter Pro-R (Mono)', 'FabFilter Pro-R', 'FabFilter Saturn 2', 'FabFilter Simplon'];
document.getElementById('plugins').innerHTML = plugins.map(p => `<li><svg><use href="#gear"/></svg><span>${p}</span></li>`).join('');

// [slot, row, length in slots]
const half = [
  [0, 9], [1, 9], [2, 9], [3, 9], [4, 5], [5, 5],
  [6, 9, .65], [6.67, 9, .28], [7, 10, .62], [7.64, 10, .3],
  [8, 0], [9, 0], [10, 0], [11, 2], [12, 2], [13, 2], [14, 7], [15, 7],
  [16, 5], [17, 5], [18, 5], [19, 5], [20, 2], [21, 4],
  [22, 5, .65], [22.65, 7, .3], [23, 9, .62], [23.67, 10, .3]
];
const tailA = [[24, 10], [25, 10], [26, 10], [27, 10], [28, 7], [29, 7], [30, 10], [31, 10]];
const tailB = [[56, 10], [57, 10], [58, 10], [59, 10], [60, 9], [61, 9], [62, 7], [63, 9]];
const shift = (list, s) => list.map(([a, r, l]) => [a + s, r, l]);
const melody = [...half, ...tailA, ...shift(half, 32), ...tailB];
const labels = { 5: 'A..', 24: 'F', 31: 'F', 32: 'F..', 48: 'A..', 49: 'A..', 56: 'F', 57: 'F', 58: 'F' };

// keyboard
let keys = '';
for (let r = 0; r < 25; r++) {
  const k = r % 12;
  const cls = BLACK.includes(k) ? (k === 2 ? 'key black overc' : 'key black') : k === 3 ? 'key c' : k === 10 ? 'key edge' : 'key';
  keys += `<div class="${cls}">${k === 3 ? `<span>C${r === 3 ? 7 : 6}</span>` : ''}</div>`;
}
document.getElementById('keyboard').innerHTML = keys;

function columns(h, bars) {
  let s = '';
  for (let i = 0; i <= bars * 16; i++) {
    const x = Math.round(X0 + i * BAR / 16) + .5;
    const c = i % 16 === 0 ? (i % 64 === 0 ? '#16232a' : '#1e2e36') : i % 4 === 0 ? '#293b44' : i % 2 === 0 ? '#2f424b' : '#354851';
    s += `<path d="M${x} 0V${h}" stroke="${c}"/>`;
  }
  return s;
}

// note grid
let g = '<defs><linearGradient id="ng" x1="0" y1="0" x2="0" y2="1"><stop offset="0" stop-color="#d4fbd6"/><stop offset="1" stop-color="#b0efb4"/></linearGradient></defs>';
for (let r = 0; r < 25; r++) {
  const y = TOP + r * ROW, k = r % 12;
  if (BLACK.includes(k)) g += `<rect x="0" y="${y}" width="100%" height="${ROW}" fill="#33454e"/>`;
  else g += `<path d="M0 ${Math.round(y + ROW) - .5}H3000" stroke="#34464f"/>`;
}
g += `<rect x="${4 * BAR}" y="0" width="${4 * BAR}" height="100%" fill="#1c2f38" opacity=".28"/>`;
g += columns(1200, 20);
const box = (s, r, l, cls) => `<rect class="${cls}" x="${(X0 + s * SLOT + .5).toFixed(1)}" y="${(TOP + r * ROW + .5).toFixed(1)}" width="${(l * SLOT - 1).toFixed(1)}" height="16" rx="1"/>`;
for (const [s, row] of [[0, 24], [32, 24], [16, 21], [48, 21]])
  for (const [a, l] of [[0, 1], [1, 1], [2, 1], [3, 1], [4, 1], [5, 1], [6, .65], [6.67, .28], [7, .62], [7.64, .3]])
    g += box(s + a, row, l, 'ghost');
for (const [s, r, l = 1] of melody) for (const o of [0, 12]) {
  if (o && s % 32 >= 6 && s % 32 < 8) continue;
  g += box(s, r + o, l, 'note');
  if (l < 1 || r + o === 0) continue;
  const x = X0 + s * SLOT + 2, y = TOP + (r + o) * ROW;
  let t = labels[s];
  if (t === 'F') t = o ? 'F5' : 'F6';
  g += t ? `<text x="${x}" y="${y + 13}">${t}</text>` : `<text class="dots" x="${x}" y="${y + 14}">..</text>`;
}
document.getElementById('grid').innerHTML = g;

// ruler
let ru = '';
for (let b = 0; b < 20; b++) ru += `<text class="${b % 4 === 0 && b ? 'big' : ''}" x="${X0 + b * BAR + 1}" y="15">${b + 1}</text>`;
ru += '<path d="M0 3H8L0 11z" fill="#f5c65a"/>';
document.getElementById('ruler').innerHTML = ru;

// overview
const levels = [[4, 4], [6, 3], [8, 1], [11, 1], [14, 2], [16, 4], [20, 5], [24, 4], [26, 3], [28, 1], [31, 1], [35, 3], [40, 4], [44, 2], [48, 2], [52, 3], [56, 4], [59, 4], [62, 3], [64, 4]];
let mi = '', li = 0;
for (let s = 0; s < 64; s++) {
  while (levels[li][0] <= s) li++;
  const v = levels[li][1];
  for (const y of [v, v + 4, v + 9, v + 13]) mi += `<rect x="${(2 + s * 9.03).toFixed(1)}" y="${y}" width="8" height="1.500" fill="#d5e6e2"/>`;
}
document.getElementById('mini').innerHTML = mi;

// velocity lane
let la = '';
for (let y = 5; y < 106; y += 7) la += `<path d="M0 ${y}.5H3000" stroke="#2f414a"/>`;
la += columns(120, 20) + '<text x="8" y="15">Velocity</text>';
la += `<path d="M0 33.500H${64 * SLOT - 2}" stroke="#8c9b9f" stroke-width="1.500"/>`;
for (const [s] of melody) {
  const x = (X0 + s * SLOT + .5).toFixed(1);
  la += `<path d="M${x} 36V120" stroke="#22382f" stroke-width="6"/><path d="M${x} 36V120" stroke="#e6f8e8" stroke-width="4"/>`;
}
for (const [s] of melody) la += `<circle cx="${(X0 + s * SLOT + .5).toFixed(1)}" cy="33.500" r="3.200" fill="#5fa266" stroke="#dff3e0" stroke-width="1.500"/>`;
document.getElementById('lane').innerHTML = la;
```
